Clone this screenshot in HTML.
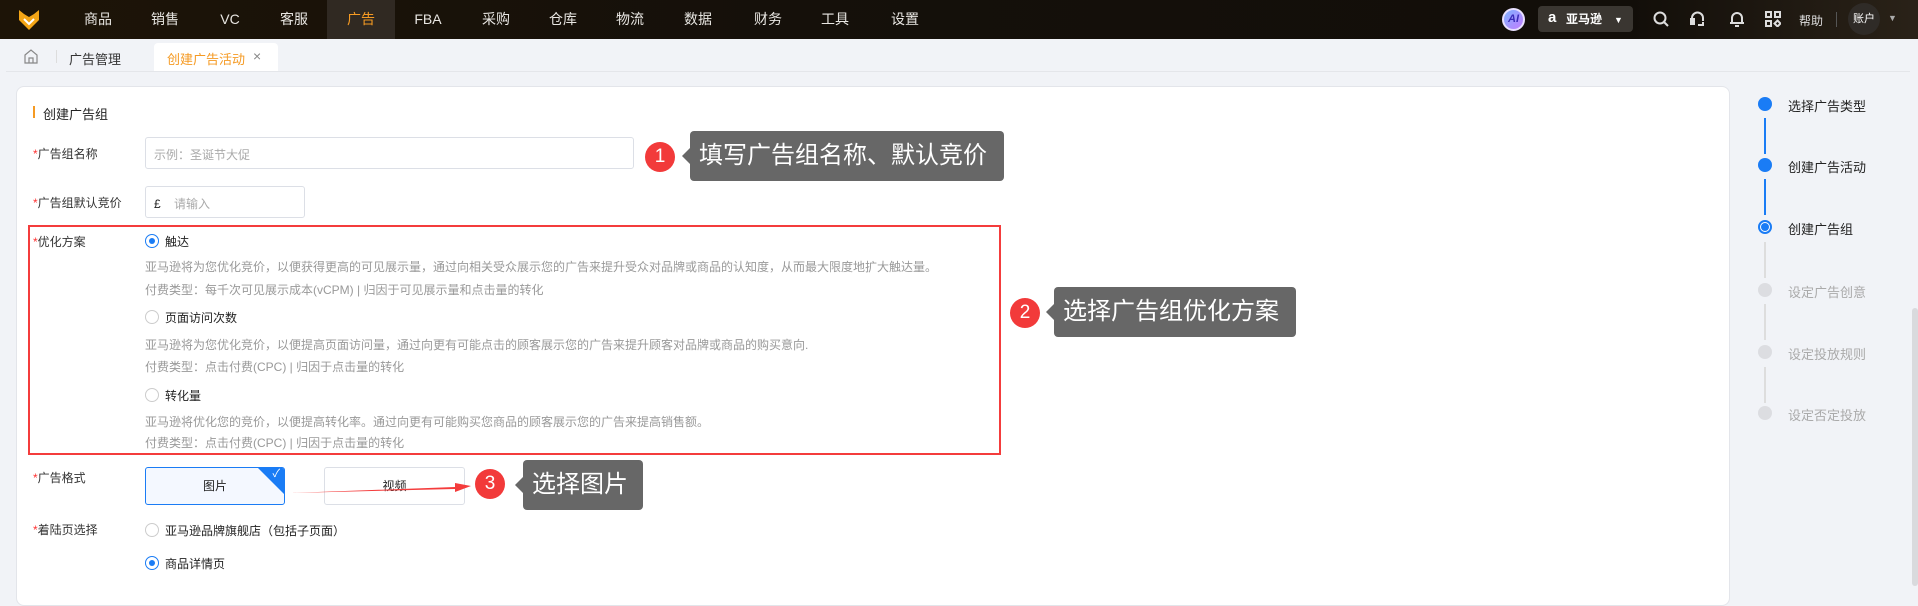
<!DOCTYPE html>
<html><head><meta charset="utf-8"><style>
*{margin:0;padding:0;box-sizing:border-box}
body{width:1918px;height:586px;overflow:hidden;background:#f1f3f7;font-family:"Liberation Sans","Noto Sans CJK SC",sans-serif;position:relative;color:#222}
.a{position:absolute}
.top{left:0;top:0;width:1918px;height:39px;background:linear-gradient(90deg,#1d1407 0%,#15100a 40%,#120e09 85%,#2a2218 100%)}
.nav{color:#e8e6e2;font-size:14px;top:0;height:39px;line-height:39px;transform:translateX(-50%)}
.lbl{font-size:12px;color:#333}
.lbl b{color:#f33;font-weight:normal}
.desc{font-size:12px;color:#999}
.radio{width:14px;height:14px;border:1px solid #ccc;border-radius:50%;background:#fff}
.radio.on{border-color:#1a7cf5}
.radio.on::after{content:"";position:absolute;left:3px;top:3px;width:6px;height:6px;border-radius:50%;background:#1a7cf5}
.rt{font-size:12px;color:#222}
.circ{width:30px;height:30px;border-radius:50%;background:#f23a3a;color:#fff;font-size:19px;text-align:center;line-height:30px}
.box{background:#676767;color:#fff;border-radius:4px;font-size:24px;line-height:50px;padding-left:9px;white-space:nowrap}
.box::before{content:"";position:absolute;left:-8px;top:50%;margin-top:-8px;border:8px solid transparent;border-left:0;border-right-color:#676767}
.dot{width:14px;height:14px;border-radius:50%;left:1758px}
.st{left:1788px;font-size:13px}
.vl{width:2px;left:1764px}
</style></head><body>
<div class="a top"></div>
<svg class="a" style="left:17px;top:8px" width="24" height="24" viewBox="0 0 24 24"><path d="M2 2 L7 6 L12 9 L17 6 L22 2 L22 12 L12 22 L2 12 Z" fill="#f3a516"/><path d="M7 11 L12 16 L17 11" fill="none" stroke="#fff" stroke-width="2"/></svg>
<div class="a" style="left:327px;top:0;width:68px;height:39px;background:#302922"></div>
<div class="a nav" style="left:98px">商品</div><div class="a nav" style="left:165px">销售</div><div class="a nav" style="left:230px">VC</div><div class="a nav" style="left:294px">客服</div><div class="a nav" style="left:361px;color:#f59a23">广告</div><div class="a nav" style="left:428px">FBA</div><div class="a nav" style="left:496px">采购</div><div class="a nav" style="left:563px">仓库</div><div class="a nav" style="left:630px">物流</div><div class="a nav" style="left:698px">数据</div><div class="a nav" style="left:768px">财务</div><div class="a nav" style="left:835px">工具</div><div class="a nav" style="left:905px">设置</div>
<div class="a" style="left:1502px;top:8px;width:23px;height:23px;border-radius:50%;background:linear-gradient(135deg,#7fb3ff,#c27cff);border:2px solid #e8e0ff;color:#3b2db8;font-size:11px;font-weight:bold;text-align:center;line-height:19px;font-style:italic">AI</div>
<div class="a" style="left:1538px;top:6px;width:95px;height:26px;background:#3a3631;border-radius:4px;color:#fff;font-size:12px;line-height:26px"><span style="position:absolute;left:10px;font-weight:bold;font-size:15px;top:-1px">a</span><span style="position:absolute;left:28px;font-weight:bold">亚马逊</span><span style="position:absolute;left:76px;top:1px;font-size:9px">▼</span></div>
<svg class="a" style="left:1653px;top:11px" width="17" height="17" viewBox="0 0 17 17" fill="none" stroke="#ddd" stroke-width="2"><circle cx="7" cy="7" r="5.5"/><path d="M11 11 L15 15"/></svg>
<svg class="a" style="left:1689px;top:10px" width="17" height="18" viewBox="0 0 17 18" fill="none" stroke="#ddd" stroke-width="2"><path d="M3 11 V8 a5.5 5.5 0 0 1 11 0 V11"/><rect x="2" y="9" width="3" height="5" fill="#ddd"/><path d="M14 12 v3 h-5"/></svg>
<svg class="a" style="left:1729px;top:10px" width="16" height="18" viewBox="0 0 16 18" fill="none" stroke="#ddd" stroke-width="2"><path d="M3 13 V8 a5 5 0 0 1 10 0 V13 Z M1 13 H15 M6 16 H10"/></svg>
<svg class="a" style="left:1765px;top:11px" width="16" height="16" viewBox="0 0 16 16" fill="none" stroke="#ddd" stroke-width="2"><rect x="1" y="1" width="5" height="5"/><rect x="10" y="1" width="5" height="5"/><rect x="1" y="10" width="5" height="5"/><path d="M12.5 9.5 L15.5 12.5 L12.5 15.5 L9.5 12.5 Z"/></svg>
<div class="a" style="left:1799px;top:12px;color:#ddd;font-size:12px">帮助</div>
<div class="a" style="left:1836px;top:12px;width:1px;height:15px;background:#555"></div>
<div class="a" style="left:1848px;top:3px;width:32px;height:32px;border-radius:50%;background:#2f2b27;color:#fff;font-size:11px;text-align:center;line-height:32px">账户</div>
<div class="a" style="left:1888px;top:13px;color:#aaa;font-size:9px">▼</div>
<svg class="a" style="left:24px;top:49px" width="14" height="15" viewBox="0 0 14 15" fill="none" stroke="#888" stroke-width="1.2"><path d="M1 6 L7 1 L13 6 V14 H1 Z M5 14 V9 H9 V14"/></svg>
<div class="a" style="left:56px;top:50px;width:1px;height:13px;background:#ddd"></div>
<div class="a" style="left:69px;top:49px;font-size:13px;color:#333">广告管理</div>
<div class="a" style="left:154px;top:43px;width:124px;height:29px;background:#fff;border-radius:4px 4px 0 0"></div>
<div class="a" style="left:167px;top:49px;font-size:13px;color:#f59a23">创建广告活动</div>
<div class="a" style="left:253px;top:48px;font-size:14px;color:#888">×</div>
<div class="a" style="left:6px;top:71px;width:1904px;height:1px;background:#e4e6ea"></div>
<div class="a" style="left:16px;top:86px;width:1714px;height:520px;background:#fff;border:1px solid #e3e5ea;border-radius:8px"></div>
<div class="a" style="left:33px;top:106px;width:2px;height:12px;background:#f59a23"></div>
<div class="a" style="left:43px;top:104px;font-size:13px;color:#222">创建广告组</div>
<div class="a lbl" style="left:33px;top:145px"><b>*</b>广告组名称</div>
<div class="a" style="left:145px;top:137px;width:489px;height:32px;border:1px solid #dcdfe6;border-radius:3px;font-size:12px;color:#aaa;padding:8px 8px">示例：圣诞节大促</div>
<div class="a lbl" style="left:33px;top:194px"><b>*</b>广告组默认竞价</div>
<div class="a" style="left:145px;top:186px;width:160px;height:32px;border:1px solid #dcdfe6;border-radius:3px;font-size:12px;color:#aaa;padding:8px 8px"><span style="color:#222">£</span>&nbsp;&nbsp;&nbsp;&nbsp;请输入</div>
<div class="a" style="left:28px;top:225px;width:973px;height:230px;border:2px solid #f43c3c"></div>
<div class="a lbl" style="left:33px;top:233px"><b>*</b>优化方案</div>
<div class="a radio on" style="left:145px;top:234px"></div><div class="a rt" style="left:165px;top:233px">触达</div>
<div class="a desc" style="left:145px;top:258px">亚马逊将为您优化竞价，以便获得更高的可见展示量，通过向相关受众展示您的广告来提升受众对品牌或商品的认知度，从而最大限度地扩大触达量。</div>
<div class="a desc" style="left:145px;top:281px">付费类型：每千次可见展示成本(vCPM) | 归因于可见展示量和点击量的转化</div>
<div class="a radio" style="left:145px;top:310px"></div><div class="a rt" style="left:165px;top:309px">页面访问次数</div>
<div class="a desc" style="left:145px;top:336px">亚马逊将为您优化竞价，以便提高页面访问量，通过向更有可能点击的顾客展示您的广告来提升顾客对品牌或商品的购买意向.</div>
<div class="a desc" style="left:145px;top:358px">付费类型：点击付费(CPC) | 归因于点击量的转化</div>
<div class="a radio" style="left:145px;top:388px"></div><div class="a rt" style="left:165px;top:387px">转化量</div>
<div class="a desc" style="left:145px;top:413px">亚马逊将优化您的竞价，以便提高转化率。通过向更有可能购买您商品的顾客展示您的广告来提高销售额。</div>
<div class="a desc" style="left:145px;top:434px">付费类型：点击付费(CPC) | 归因于点击量的转化</div>
<div class="a lbl" style="left:33px;top:469px"><b>*</b>广告格式</div>
<div class="a" style="left:145px;top:467px;width:140px;height:38px;border:1px solid #1a7cf5;background:#f4f8ff;border-radius:3px;font-size:12px;text-align:center;line-height:36px;overflow:hidden">图片<div class="a" style="right:0;top:0;width:0;height:0;border-top:26px solid #1a7cf5;border-left:26px solid transparent"></div><div class="a" style="right:4px;top:-12px;color:#fff;font-size:11px">✓</div></div>
<div class="a" style="left:324px;top:467px;width:141px;height:38px;border:1px solid #dcdfe6;border-radius:3px;font-size:12px;text-align:center;line-height:36px">视频</div>
<svg class="a" style="left:285px;top:474px" width="200" height="26"><path d="M6 19 L170 13 L170 9 L186 12 L170 18 L170 15 Z" fill="#f43c3c"/></svg>
<div class="a lbl" style="left:33px;top:521px"><b>*</b>着陆页选择</div>
<div class="a radio" style="left:145px;top:523px"></div><div class="a rt" style="left:165px;top:522px">亚马逊品牌旗舰店（包括子页面）</div>
<div class="a radio on" style="left:145px;top:556px"></div><div class="a rt" style="left:165px;top:555px">商品详情页</div>
<div class="a circ" style="left:645px;top:142px">1</div>
<div class="a box" style="left:690px;top:131px;width:314px;height:50px">填写广告组名称、默认竞价</div>
<div class="a circ" style="left:1010px;top:298px">2</div>
<div class="a box" style="left:1054px;top:287px;width:242px;height:50px">选择广告组优化方案</div>
<div class="a circ" style="left:475px;top:469px">3</div>
<div class="a box" style="left:523px;top:460px;width:120px;height:50px">选择图片</div>
<div class="a vl" style="top:118px;height:36px;background:#1a7cf5"></div>
<div class="a vl" style="top:179px;height:36px;background:#1a7cf5"></div>
<div class="a vl" style="top:242px;height:36px;background:#ddd"></div>
<div class="a vl" style="top:304px;height:36px;background:#ddd"></div>
<div class="a vl" style="top:367px;height:36px;background:#ddd"></div>
<div class="a dot" style="top:97px;background:#1a7cf5"></div><div class="a st" style="top:96px">选择广告类型</div>
<div class="a dot" style="top:158px;background:#1a7cf5"></div><div class="a st" style="top:157px">创建广告活动</div>
<div class="a dot" style="top:220px;border:2px solid #1a7cf5;background:#fff"><div class="a" style="left:1px;top:1px;width:8px;height:8px;border-radius:50%;background:#1a7cf5"></div></div><div class="a st" style="top:219px">创建广告组</div>
<div class="a dot" style="top:283px;background:#dcdde1"></div><div class="a st" style="top:282px;color:#aaa">设定广告创意</div>
<div class="a dot" style="top:345px;background:#dcdde1"></div><div class="a st" style="top:344px;color:#aaa">设定投放规则</div>
<div class="a dot" style="top:406px;background:#dcdde1"></div><div class="a st" style="top:405px;color:#aaa">设定否定投放</div>
<div class="a" style="left:1912px;top:308px;width:6px;height:278px;background:#d9dadd;border-radius:3px"></div>
</body></html>
